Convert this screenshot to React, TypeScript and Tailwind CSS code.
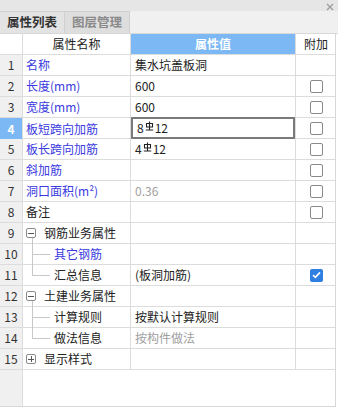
import React from 'react';

type Row = {
  name: string;
  value?: React.ReactNode;
  nameColor?: 'blue' | 'black';
  valueGray?: boolean;
  check?: 'none' | 'empty' | 'checked';
  tree?: 'minus' | 'plus' | 'child' | 'last';
};

// 钢筋三级符号
const Rebar = () => (
  <svg width="9" height="10" viewBox="0 0 9 10" className="mx-[1px] -translate-y-[2px]">
    <path d="M4.5 0.5 V9.5 M1.5 2.5 H7.5 V6 H1.5 Z M0.8 9 H8.2" stroke="#222" strokeWidth="1.1" fill="none" />
  </svg>
);

const rows: Row[] = [
  { name: '名称', value: '集水坑盖板洞', nameColor: 'blue' },
  { name: '长度(mm)', value: '600', nameColor: 'blue', check: 'empty' },
  { name: '宽度(mm)', value: '600', nameColor: 'blue', check: 'empty' },
  {
    name: '板短跨向加筋',
    value: (
      <span className="flex items-center">
        8<Rebar />12
      </span>
    ),
    nameColor: 'blue',
    check: 'empty',
  },
  {
    name: '板长跨向加筋',
    value: (
      <span className="flex items-center">
        4<Rebar />12
      </span>
    ),
    nameColor: 'blue',
    check: 'empty',
  },
  { name: '斜加筋', nameColor: 'blue', check: 'empty' },
  { name: '洞口面积(m²)', value: '0.36', nameColor: 'blue', valueGray: true, check: 'empty' },
  { name: '备注', check: 'empty' },
  { name: '钢筋业务属性', tree: 'minus' },
  { name: '其它钢筋', nameColor: 'blue', tree: 'child' },
  { name: '汇总信息', value: '(板洞加筋)', tree: 'last', check: 'checked' },
  { name: '土建业务属性', tree: 'minus' },
  { name: '计算规则', value: '按默认计算规则', tree: 'child' },
  { name: '做法信息', value: '按构件做法', valueGray: true, tree: 'last' },
  { name: '显示样式', tree: 'plus' },
];

const Box = ({ sign }: { sign: '-' | '+' }) => (
  <span className="relative w-[10px] h-[10px] border border-[#8a8a8a] rounded-[2px] bg-white flex items-center justify-center">
    <span className="absolute w-[6px] h-px bg-[#555]" />
    {sign === '+' && <span className="absolute w-px h-[6px] bg-[#555]" />}
  </span>
);

const NameCell = ({ row }: { row: Row }) => {
  const color = row.nameColor === 'blue' ? 'text-[#3a3ae0]' : 'text-[#222]';
  if (row.tree === 'minus' || row.tree === 'plus') {
    return (
      <div className="relative h-full flex items-center pl-[3px] gap-[8px]">
        <Box sign={row.tree === 'minus' ? '-' : '+'} />
        <span className={color}>{row.name}</span>
        {row.tree === 'minus' && (
          <span className="absolute left-[9px] top-[15px] bottom-[-1px] w-px bg-[#c8c8c8]" />
        )}
      </div>
    );
  }
  if (row.tree === 'child' || row.tree === 'last') {
    return (
      <div className="relative h-full flex items-center pl-[31px]">
        <span
          className={`absolute left-[9px] top-0 w-px bg-[#c8c8c8] ${row.tree === 'last' ? 'h-[10px]' : 'h-[21px]'}`}
        />
        <span className="absolute left-[9px] top-[10px] w-[18px] h-px bg-[#c8c8c8]" />
        <span className={color}>{row.name}</span>
      </div>
    );
  }
  return (
    <div className="h-full flex items-center pl-[3px]">
      <span className={color}>{row.name}</span>
    </div>
  );
};

const Check = ({ state }: { state?: Row['check'] }) => {
  if (state === 'empty')
    return <span className="w-[13px] h-[13px] border border-[#8a8a8a] rounded-[2px] bg-white" />;
  if (state === 'checked')
    return (
      <span className="w-[13px] h-[13px] rounded-[2px] bg-[#2f7fe0] flex items-center justify-center">
        <svg width="9" height="8" viewBox="0 0 9 8">
          <path d="M1 4.2 L3.4 6.4 L8 1.4" stroke="white" strokeWidth="1.6" fill="none" />
        </svg>
      </span>
    );
  return null;
};

export default function App() {
  return (
    <div
      className="w-[338px] h-[408px] bg-white text-[12px] leading-none overflow-hidden"
      style={{ fontFamily: '"Noto Sans CJK SC", "Noto Sans", sans-serif' }}
    >
      {/* title strip */}
      <div className="h-[11px] bg-[#e6e6e6] flex justify-end items-center pr-[4px]">
        <svg width="8" height="8" viewBox="0 0 8 8" className="mt-[2px]">
          <path d="M1 1 L7 7 M7 1 L1 7" stroke="#9a9a9a" strokeWidth="1.2" />
        </svg>
      </div>

      {/* tabs */}
      <div className="h-[23px] bg-[#f0f0f0] flex items-end border-b border-[#d8d8d8]">
        <div className="w-[65px] h-[22px] bg-[#e3e3e3] border-r border-t border-[#d0d0d0] flex items-center justify-center font-bold text-[#333] text-[12.5px]">
          属性列表
        </div>
        <div className="w-[65px] h-[22px] bg-[#dedede] border-r border-t border-[#d0d0d0] flex items-center justify-center font-bold text-[#8a8a8a] text-[12.5px]">
          图层管理
        </div>
      </div>

      <div className="w-[336px] border-r border-b border-[#d8d8d8]">
        {/* header */}
        <div className="h-[21px] grid grid-cols-[23px_108px_164px_41px] border-b border-[#dcdcdc]">
          <div className="border-r border-[#dcdcdc]" />
          <div className="border-r border-[#dcdcdc] flex items-center justify-center text-[#222]">属性名称</div>
          <div className="bg-[#7cb8f4] flex items-center justify-center text-white font-bold">属性值</div>
          <div className="border-l border-[#dcdcdc] flex items-center justify-center text-[#222]">附加</div>
        </div>

        {rows.map((row, i) => {
          const sel = i === 3;
          return (
            <div
              key={i}
              className="h-[21px] grid grid-cols-[23px_108px_164px_41px] border-b border-[#dcdcdc]"
            >
              <div
                className={`border-r border-[#dcdcdc] flex items-center justify-center ${
                  sel ? 'bg-[#7cb8f4] text-white font-bold' : 'bg-[#f0f0f0] text-[#333]'
                }`}
              >
                {i + 1}
              </div>
              <div className="border-r border-[#dcdcdc]">
                <NameCell row={row} />
              </div>
              <div
                className={`flex items-center pl-[4px] ${
                  sel ? 'border-2 border-[#7a7a7a] -mt-px h-[22px] pl-[3px]' : ''
                } ${row.valueGray ? 'text-[#a0a0a0]' : 'text-[#222]'}`}
              >
                {row.value}
              </div>
              <div className="border-l border-[#dcdcdc] flex items-center justify-center">
                <Check state={row.check} />
              </div>
            </div>
          );
        })}

        {/* empty area */}
        <div className="h-[36px] flex">
          <div className="w-[23px] bg-[#f0f0f0] border-r border-[#dcdcdc]" />
        </div>
      </div>
    </div>
  );
}
